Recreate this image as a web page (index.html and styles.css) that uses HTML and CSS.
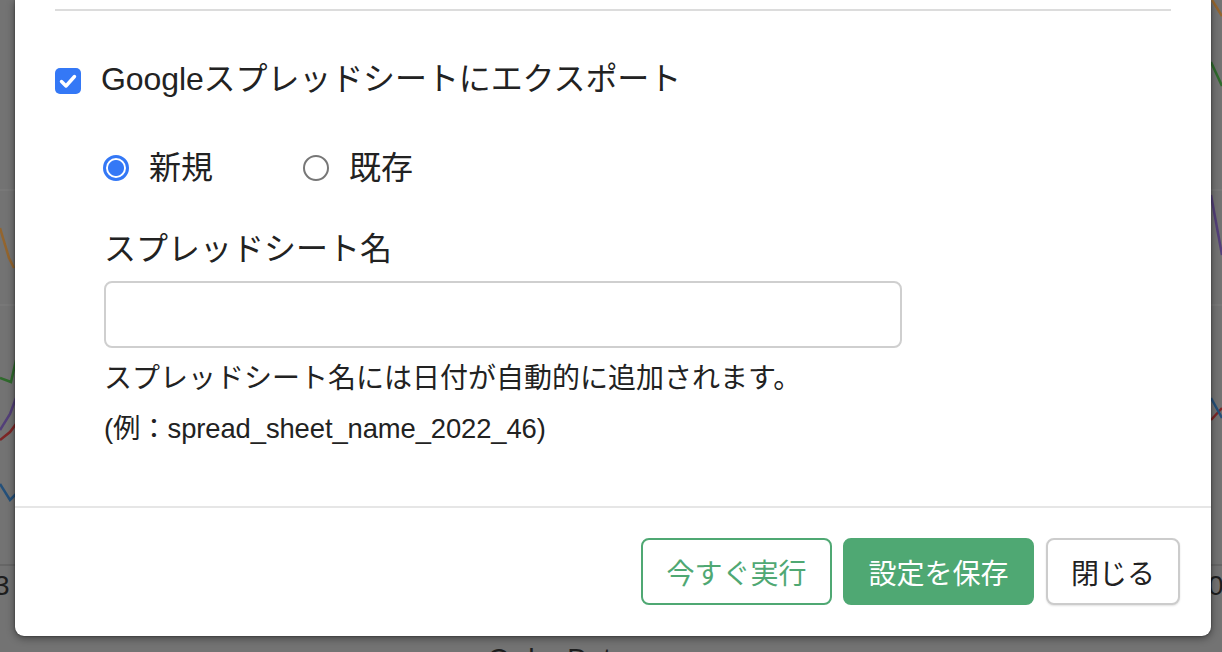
FILE: index.html
```html
<!DOCTYPE html>
<html lang="ja">
<head>
<meta charset="utf-8">
<link rel="stylesheet" href="styles.css">
</head>
<body>
<div class="page">
  <svg class="chart" width="1222" height="652" viewBox="0 0 1222 652">
    <rect width="1222" height="652" fill="#737373"/>
    <line x1="0" y1="190" x2="1222" y2="190" stroke="#7e7e7e" stroke-width="1"/>
    <line x1="0" y1="305" x2="1222" y2="305" stroke="#7e7e7e" stroke-width="1"/>
    <line x1="0" y1="565" x2="1222" y2="565" stroke="#5a5a5a" stroke-width="1"/>
    <polyline points="0,228 9,258 14,268" fill="none" stroke="#94652e" stroke-width="2.5"/>
    <polyline points="0,378 11,382 16,360" fill="none" stroke="#2f6a2c" stroke-width="2.5"/>
    <polyline points="0,430 10,414 16,398" fill="none" stroke="#533f79" stroke-width="2.5"/>
    <polyline points="0,440 10,432 16,424" fill="none" stroke="#7d2626" stroke-width="2.5"/>
    <polyline points="0,484 10,500 16,494" fill="none" stroke="#24507a" stroke-width="2.5"/>
    <polyline points="1212,0 1222,16" fill="none" stroke="#94652e" stroke-width="2.5"/>
    <polyline points="1211,62 1222,86" fill="none" stroke="#2f6a2c" stroke-width="2.5"/>
    <polyline points="1211,195 1222,255" fill="none" stroke="#533f79" stroke-width="2.5"/>
    <polyline points="1211,420 1222,408" fill="none" stroke="#7d2626" stroke-width="2.5"/>
    <polyline points="1211,398 1222,418" fill="none" stroke="#24507a" stroke-width="2.5"/>
    <text x="-6" y="595" class="axis-text">3</text>
    <text x="1208" y="595" class="axis-text">0</text>
    <text x="488" y="668" class="axis-title">Order Date</text>
  </svg>

  <div class="modal">
    <div class="modal-body">
      <div class="divider"></div>

      <label class="check-row">
        <span class="checkbox">
          <svg width="26" height="26" viewBox="0 0 26 26">
            <rect width="26" height="26" rx="5" fill="#3478f6"/>
            <path d="M6.5 13.5 L11 18 L19.5 8.5" fill="none" stroke="#fff" stroke-width="3.4" stroke-linecap="round" stroke-linejoin="round"/>
          </svg>
        </span>
        <span class="check-label">Googleスプレッドシートにエクスポート</span>
      </label>

      <div class="section">
        <div class="radio-row">
          <label class="radio-item">
            <span class="radio radio-on"></span>
            <span class="radio-label">新規</span>
          </label>
          <label class="radio-item">
            <span class="radio"></span>
            <span class="radio-label">既存</span>
          </label>
        </div>

        <div class="field-label">スプレッドシート名</div>
        <div class="input"></div>
        <div class="help">スプレッドシート名には日付が自動的に追加されます。</div>
        <div class="help example">(例：spread_sheet_name_2022_46)</div>
      </div>
    </div>
    <div class="modal-footer">
      <button class="btn btn-outline">今すぐ実行</button>
      <button class="btn btn-primary">設定を保存</button>
      <button class="btn btn-default">閉じる</button>
    </div>
  </div>
</div>
</body>
</html>
```

FILE: styles.css
```css
* { box-sizing: border-box; }

html, body {
  margin: 0;
  padding: 0;
  width: 1222px;
  height: 652px;
  overflow: hidden;
  font-family: "Liberation Sans", "Noto Sans CJK JP", sans-serif;
  color: #222;
}

.page {
  position: relative;
  width: 1222px;
  height: 652px;
  background: #737373;
}

.chart {
  display: block;
}

.axis-text {
  font-family: "Liberation Sans", sans-serif;
  font-size: 28px;
  fill: #1e1e1e;
}

.axis-title {
  font-family: "Liberation Sans", sans-serif;
  font-size: 28px;
  fill: #1e1e1e;
}

.modal {
  position: absolute;
  left: 15px;
  top: 0;
  width: 1196px;
  height: 636px;
  background: #fff;
  border-radius: 0 0 9px 9px;
  box-shadow: 0 2px 8px rgba(0, 0, 0, 0.45), 0 0 2px rgba(0, 0, 0, 0.5);
  display: flex;
  flex-direction: column;
}

.modal-body {
  padding: 9px 40px 0 40px;
  height: 506px;
}

.divider {
  height: 2px;
  background: #dcdcdc;
}

.check-row {
  display: flex;
  align-items: center;
  margin-top: 57px;
  height: 26px;
  gap: 20px;
}

.checkbox {
  display: block;
  width: 26px;
  height: 26px;
}

.checkbox svg { display: block; }

.check-label {
  font-size: 32px;
  line-height: 36px;
  letter-spacing: -0.1px;
  position: relative;
  top: -2px;
}

.section {
  padding-left: 49px;
}

.radio-row {
  display: flex;
  align-items: center;
  margin-top: 61px;
  height: 26px;
  gap: 91px;
}

.radio-item {
  display: flex;
  align-items: center;
  gap: 20px;
}

.radio {
  display: block;
  width: 26px;
  height: 26px;
  border-radius: 50%;
  border: 2px solid #777;
  margin-left: -1px;
}

.radio-on {
  border: 3px solid #3478f6;
  background: radial-gradient(circle, #3478f6 0 7.5px, #fff 8.5px);
}

.radio-label {
  font-size: 32px;
  line-height: 36px;
}

.field-label {
  font-size: 32px;
  line-height: 36px;
  margin-top: 50px;
}

.input {
  margin-top: 14px;
  width: 798px;
  height: 67px;
  border: 2px solid #cfcfcf;
  border-radius: 8px;
  background: #fff;
}

.help {
  font-size: 28px;
  line-height: 32px;
  margin-top: 15px;
}

.help.example {
  margin-top: 18px;
  font-size: 27.4px;
  letter-spacing: -0.1px;
}

.modal-footer {
  border-top: 2px solid #e6e6e6;
  flex: 1;
  display: flex;
  justify-content: flex-end;
  align-items: flex-start;
  padding: 30px 31px 0 0;
  gap: 11px;
}

.btn {
  height: 67px;
  border-radius: 8px;
  font-family: "Liberation Sans", "Noto Sans CJK JP", sans-serif;
  font-size: 28px;
  padding: 0;
  cursor: pointer;
}

.btn-outline {
  width: 191px;
  background: #fff;
  border: 2px solid #4fa873;
  color: #4fa873;
}

.btn-primary {
  width: 191px;
  background: #4fa873;
  border: 2px solid #4fa873;
  color: #fff;
}

.btn-default {
  width: 134px;
  margin-left: 1px;
  background: #fff;
  border: 2px solid #cccccc;
  color: #222;
  box-shadow: 0 1px 2px rgba(0, 0, 0, 0.12);
}
```
